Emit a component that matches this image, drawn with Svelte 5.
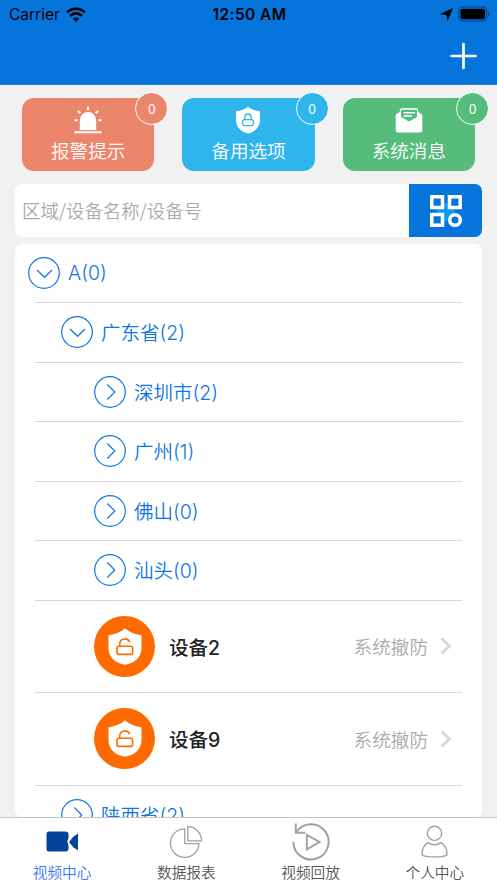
<script>
  const cards = [
    { label: '报警提示', icon: 'alarm', count: 0 },
    { label: '备用选项', icon: 'shield', count: 0 },
    { label: '系统消息', icon: 'mail', count: 0 }
  ];

  const nodes = [
    { name: 'A', count: 0, level: 0, open: true },
    { name: '广东省', count: 2, level: 1, open: true },
    { name: '深圳市', count: 2, level: 2 },
    { name: '广州', count: 1, level: 2 },
    { name: '佛山', count: 0, level: 2 },
    { name: '汕头', count: 0, level: 2 },
    { name: '设备2', status: '系统撤防', device: true },
    { name: '设备9', status: '系统撤防', device: true },
    { name: '陕西省', count: 2, level: 1 }
  ];

  const tabs = [
    { label: '视频中心', icon: 'video' },
    { label: '数据报表', icon: 'chart' },
    { label: '视频回放', icon: 'replay' },
    { label: '个人中心', icon: 'user' }
  ];

  let active = $state('video');
</script>

<div class="app">
  <header class="header">
    <div class="status">
      <div class="carrier">
        <span>Carrier</span>
        <svg width="20" height="15" viewBox="0 0 20 15" fill="none" stroke="#000" stroke-width="2.7">
          <path d="M1.1 5.4a12.7 12.7 0 0 1 17.8 0" />
          <path d="M4.3 8.8a8.1 8.1 0 0 1 11.4 0" />
          <path d="M10 15 6.8 11.7a4.6 4.6 0 0 1 6.4 0z" fill="#000" stroke="none" />
        </svg>
      </div>
      <div class="time">12:50 AM</div>
      <div class="power">
        <svg width="13" height="13" viewBox="0 0 12 13">
          <path d="M12 .6 7.1 12.3 6.2 6.7 0 6z" stroke="#000" stroke-width=".5" stroke-linejoin="round" />
        </svg>
        <svg width="32" height="16" viewBox="0 0 32 16">
          <rect x=".7" y="1" width="28" height="14" rx="4" fill="none" stroke="#000" stroke-opacity=".45" />
          <rect x="2.4" y="2.7" width="24.6" height="10.6" rx="2.5" />
          <path d="M30.2 5.6c1.5.6 1.5 4.2 0 4.800z" opacity=".5" />
        </svg>
      </div>
    </div>
    <button class="add" aria-label="添加">
      <svg width="28" height="28" viewBox="0 0 28 28" fill="none" stroke="#fff" stroke-width="2.700" stroke-linecap="round">
        <path d="M13.500 2v24M1.500 14h24" />
      </svg>
    </button>
  </header>

  <section class="cards">
    {#each cards as card}
      <button class="card {card.icon}">
        <svg width="28" height="28" viewBox="0 0 28 28">
          {#if card.icon === 'alarm'}
            <path d="M5.8 24V14.3a8.2 8.2 0 0 1 16.4 0V24z" fill="#fff" />
            <path d="M.5 26.3h27M14 .8v3.4M3.8 5l2.5 2.3M24.2 5l-2.5 2.3M.5 14.2h3.2M24.3 14.2h3.2" stroke="#fff" stroke-width="2" />
          {:else if card.icon === 'shield'}
            <path d="M14 .8c3 2.5 7 4 12 4.4V14c0 7-4.5 11.4-12 13.6C6.5 25.4 2 21 2 14V5.2C7 4.8 11 3.3 14 .8z" fill="#fff" />
            <g fill="none" stroke="#2fb4ec" stroke-width="1.3">
              <rect x="8.6" y="13.6" width="10.8" height="6" rx="2" />
              <path d="M10.8 13.500v-2.300a3.200 3.200 0 0 1 6.400 0v2.300" />
            </g>
          {:else}
            <path d="M.7 8.5 4.8 6V4.5A2.200 2.200 0 0 1 7 2.300h14a2.200 2.200 0 0 1 2.200 2.200V6l4.100 2.500v15.300a2.600 2.600 0 0 1-2.600 2.600H3.300a2.600 2.600 0 0 1-2.600-2.600z" fill="#fff" />
            <path d="M6 3.800h16v7.200l-8 4.600L6 11z" fill="#56bc7c" />
            <path d="M8.500 6.700h11.500M8.500 10h8.500" stroke="#fff" stroke-width="1.500" />
          {/if}
        </svg>
        <span>{card.label}</span>
        <i class="badge">{card.count}</i>
      </button>
    {/each}
  </section>

  <div class="search">
    <input type="text" placeholder="区域/设备名称/设备号" />
    <button class="scan" aria-label="分类">
      <svg width="32" height="32" viewBox="0 0 32 32" fill="none">
        <path d="M7 8h18v18H7z" fill="#0a9bf8" />
        <g fill="#0575dc" stroke="#fff" stroke-width="3.5">
          <rect x="1.8" y="1.8" width="10.7" height="10.7" />
          <rect x="19.5" y="1.8" width="10.7" height="10.7" />
          <rect x="1.8" y="19.5" width="10.7" height="10.7" />
          <circle cx="25" cy="25" r="5.3" />
        </g>
      </svg>
    </button>
  </div>

  <main class="tree">
    {#each nodes as node}
      {#if node.device}
        <div class="row device">
          <div class="device-icon">
            <svg width="34" height="37" viewBox="0 0 34 37">
              <path d="M17 .3c3.8 3.7 9.5 6.2 16.5 6.9V20c0 9.500-7.500 15.500-16.500 16.800C8 35.500.5 29.500.5 20V7.200C7.500 6.500 13.200 4 17 .3z" fill="#fff" />
              <g fill="none" stroke="#ff6a00" stroke-width="1.6">
                <rect x="9" y="18.200" width="15.600" height="8.200" rx="2" />
                <path d="M11.700 18v-1.800a5.200 5.200 0 0 1 10-2.100" />
              </g>
            </svg>
          </div>
          <span class="device-name">{node.name}</span>
          <span class="device-status">{node.status}</span>
          <svg class="arrow" width="12" height="18" viewBox="0 0 12 18" fill="none" stroke="#d8d8d8" stroke-width="3">
            <path d="m1.500 1.500 7.800 7.500-7.800 7.500" />
          </svg>
        </div>
      {:else}
        <div class="row level-{node.level}">
          <svg class="toggle" width="32" height="32" viewBox="0 0 32 32" fill="none" stroke="#0f76e0" stroke-width="1.2">
            <circle cx="16" cy="16" r="15.3" />
            <path d={node.open ? 'm9 13 7.5 7.3L24 13' : 'm13.3 8.5 7.5 7.5-7.5 7.5'} />
          </svg>
          <span class="name">{node.name}({node.count})</span>
        </div>
      {/if}
    {/each}
  </main>

  <nav class="tabs">
    {#each tabs as tab}
      <button class:active={active === tab.icon} onclick={() => (active = tab.icon)}>
        <svg width="40" height="40" viewBox="0 0 40 40" fill="none" stroke="#a0a0a0">
          {#if tab.icon === 'video'}
            <path d="M7 9.5h16.5a3 3 0 0 1 3 3V16l-1.3 3.5 1.3 3.5v3.5a3 3 0 0 1-3 3H7A2.500 2.500 0 0 1 4.500 27V12A2.500 2.500 0 0 1 7 9.500z" fill="#024499" stroke="none" />
            <path d="M36 11.500v16.800l-4.500-2.800-4.500-5.500 4.500-5.500z" fill="#024499" stroke="none" />
          {:else if tab.icon === 'chart'}
            <path d="M18.800 6.800A14.300 14.300 0 1 0 33 21.600H18.800z" stroke-width="1.300" />
            <path d="M21.800 4.300A14.500 14.500 0 0 1 35.500 18.800H21.800z" stroke-width="1.300" />
          {:else if tab.icon === 'replay'}
            <path d="M2.400 19.800A17.600 17.600 0 1 0 5.300 10.200" stroke-width="2" />
            <path d="M4.800 1.500v9.300h9.500" stroke-width="2" />
            <path d="M15.800 12.800v14.500L28.500 20z" stroke-width="1.900" />
          {:else}
            <circle cx="19.500" cy="11.300" r="7.100" stroke-width="1.400" />
            <path d="M13 20.700C9 23 7 27.500 7 33c3.500 2.500 21.500 2.500 25 0 0-5.500-2-10-6-12.300-4 2.700-9 2.700-13 0z" stroke-width="1.400" stroke-linejoin="round" />
          {/if}
        </svg>
        <span>{tab.label}</span>
      </button>
    {/each}
  </nav>
</div>

<style>
  :global(body) {
    margin: 0;
  }

  .app {
    width: 497px;
    height: 883px;
    display: flex;
    flex-direction: column;
    overflow: hidden;
    background: #f1f1f1;
    font-family: 'Noto Sans CJK SC', sans-serif;
    font-weight: 350;
  }

  button {
    border: 0;
    padding: 0;
    background: none;
    font: inherit;
    cursor: pointer;
  }

  svg {
    display: block;
    flex: none;
  }

  .header {
    flex: none;
    height: 85px;
    box-sizing: border-box;
    display: flex;
    flex-direction: column;
    background: #0575dc;
    border-bottom: 1px solid #2b80dc;
  }

  .status {
    height: 28px;
    display: grid;
    grid-template-columns: 1fr auto 1fr;
    align-items: center;
    padding: 0 7px 0 9px;
    font-family: Inter, sans-serif;
    font-size: 15.5px;
    color: #000;
  }

  .carrier,
  .power {
    display: flex;
    align-items: center;
    gap: 6px;
  }

  .carrier {
    font-weight: 400;
  }

  .power {
    justify-content: flex-end;
    gap: 5px;
  }

  .time {
    font-weight: 600;
    letter-spacing: 0.4px;
  }

  .add {
    align-self: flex-end;
    margin: 14px 19px 0 0;
  }

  .cards {
    flex: none;
    display: flex;
    gap: 28px;
    padding: 13px 22px 0;
  }

  .card {
    position: relative;
    flex: 1;
    height: 73px;
    display: flex;
    flex-direction: column;
    align-items: center;
    padding-top: 8px;
    border-radius: 12px;
    color: #fff;
    font-size: 18.6px;
    line-height: 31px;
  }

  .alarm {
    background: #eb856b;
  }

  .shield {
    background: #2fb4ec;
  }

  .mail {
    background: #56bc7c;
  }

  .badge {
    position: absolute;
    top: -6.5px;
    right: -14px;
    width: 31px;
    height: 31px;
    border: 1.5px solid #fff;
    border-radius: 50%;
    background: inherit;
    font-size: 14px;
    font-style: normal;
    line-height: 31px;
    text-align: center;
  }

  .search {
    flex: none;
    display: flex;
    height: 53px;
    margin: 13px 15px 0;
    border-radius: 7px;
    overflow: hidden;
    background: #fff;
  }

  .search input {
    flex: 1;
    min-width: 0;
    padding: 0 7px 2px;
    border: 0;
    outline: 0;
    background: none;
    font: inherit;
    font-size: 18.4px;
  }

  .search input::placeholder {
    color: #aaa;
  }

  .scan {
    width: 73px;
    display: flex;
    align-items: center;
    justify-content: center;
    background: #0575dc;
  }

  .tree {
    flex: 1;
    min-height: 0;
    margin: 7px 15px 0;
    border-radius: 7px;
    overflow: hidden;
    background: #fff;
  }

  .row {
    display: flex;
    align-items: center;
    gap: 8px;
    height: 59.5px;
    margin: 0 20px;
    box-sizing: border-box;
    border-bottom: 1px solid #d6d6d6;
    color: #0f76e0;
    font-family: Inter, 'Noto Sans CJK SC', sans-serif;
    font-size: 19.5px;
  }

  .row:first-child {
    height: 59px;
  }

  .name {
    padding-bottom: 1px;
  }

  .toggle {
    margin-left: -7px;
  }

  .level-1 .toggle {
    margin-left: 26px;
  }

  .level-2 .toggle {
    margin-left: 59px;
  }

  .device {
    gap: 0;
    height: 92.5px;
    padding: 0 10px 0 59px;
  }

  .device-icon {
    width: 61px;
    height: 61px;
    display: flex;
    align-items: center;
    justify-content: center;
    border-radius: 50%;
    background: #ff6a00;
  }

  .device-name {
    margin-left: 14px;
    color: #222;
    font-weight: 500;
  }

  .device-status {
    margin-left: auto;
    padding-bottom: 1px;
    color: #aaa;
    font-size: 18.6px;
  }

  .arrow {
    margin-left: 12px;
  }

  .tabs {
    flex: none;
    height: 66px;
    box-sizing: border-box;
    display: flex;
    border-top: 1px solid #c4c4c4;
    background: #fff;
  }

  .tabs button {
    flex: 1;
    display: flex;
    flex-direction: column;
    align-items: center;
    padding-top: 4px;
    color: #555;
    font-size: 14.7px;
    line-height: 20px;
  }

  .tabs .active {
    color: #3478f6;
  }
</style>
